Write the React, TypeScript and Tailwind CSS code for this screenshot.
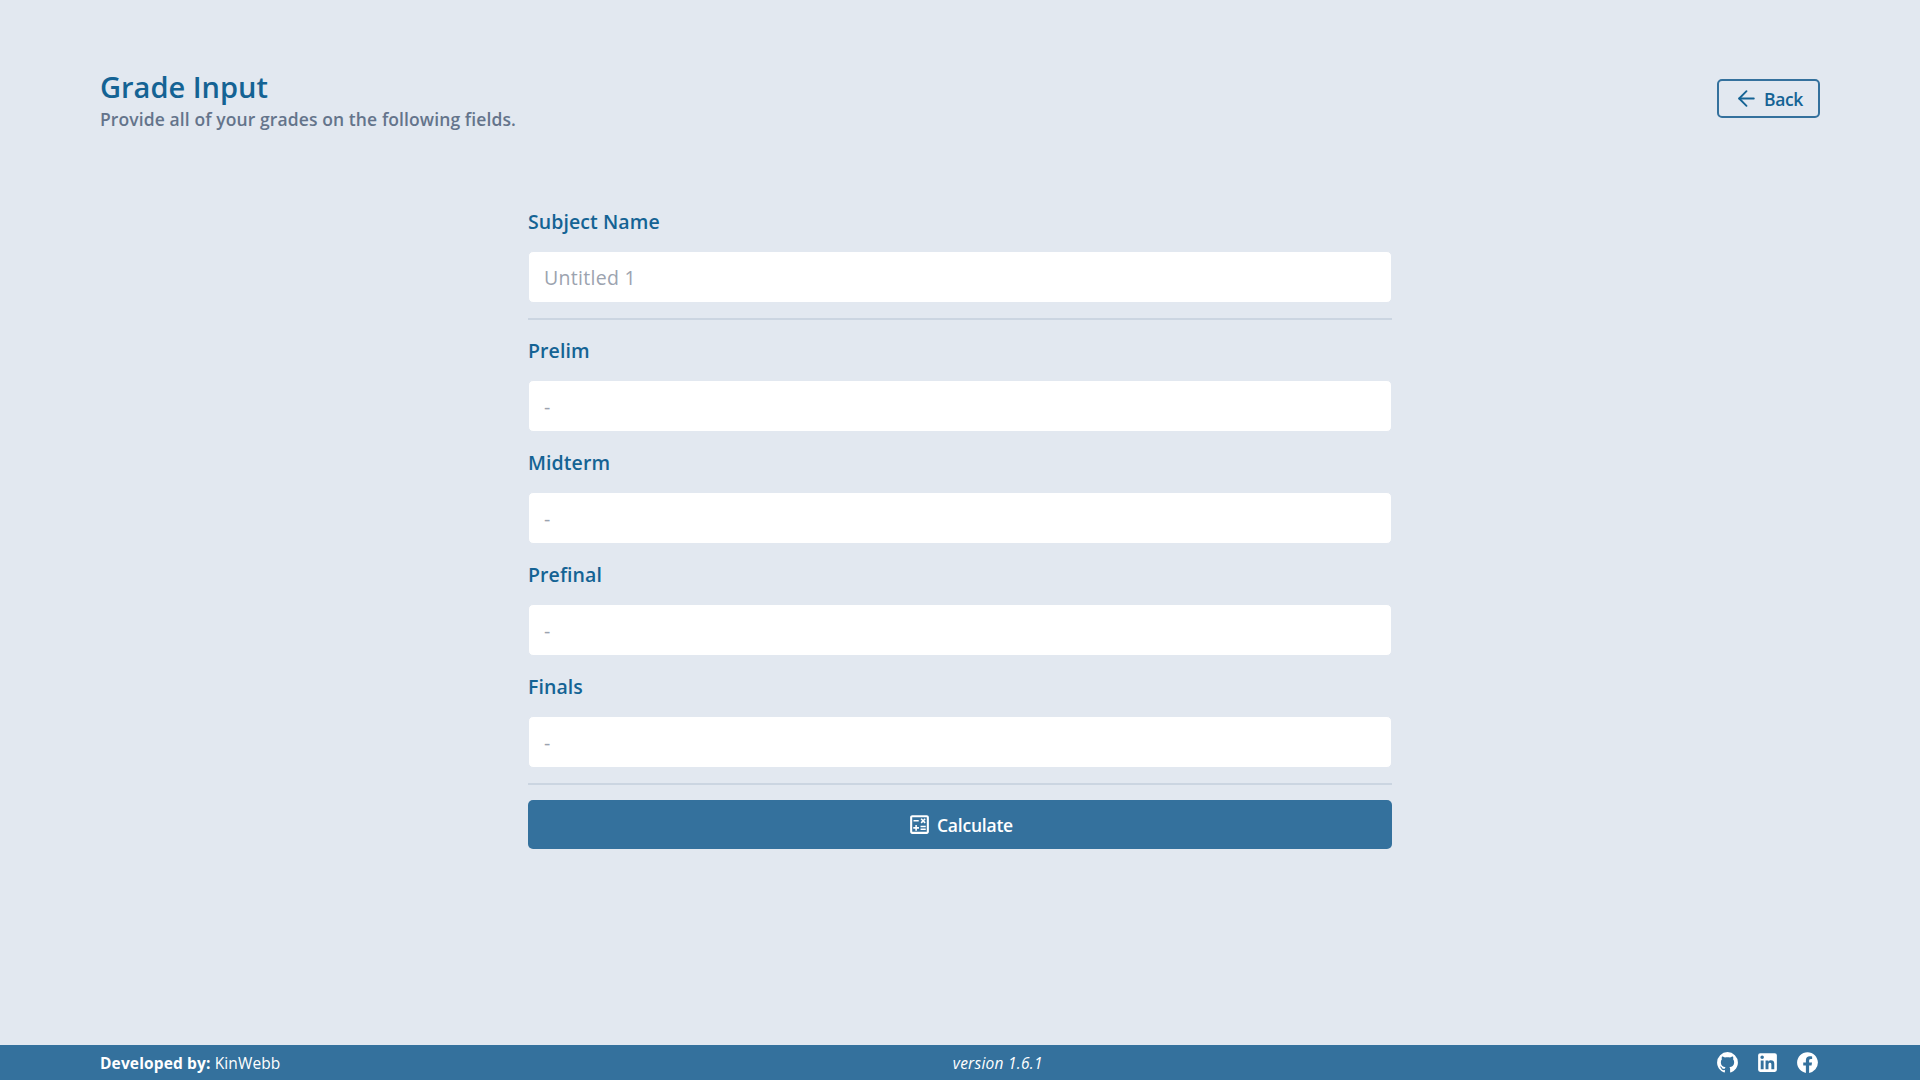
import React from 'react';
import { FiArrowLeft } from 'react-icons/fi';
import { MdOutlineCalculate } from 'react-icons/md';

type FieldProps = { label: string; placeholder: string };

function Field({ label, placeholder }: FieldProps) {
  return (
    <label className="flex flex-col gap-[15px]">
      <span className="pt-px text-[19.5px] leading-7 font-semibold tracking-[0.08px] text-[#146394]">{label}</span>
      <input
        className="h-[52px] w-full rounded-[5px] border border-[#e2e8f0] bg-white px-[15px] text-[19.5px] tracking-[0.3px] text-slate-700 outline-none placeholder:text-[#9ca3af]"
        placeholder={placeholder}
      />
    </label>
  );
}

const SOCIALS = [
  {
    name: 'GitHub',
    path: 'M12 2A10 10 0 0 0 2 12c0 4.42 2.87 8.17 6.84 9.5.5.08.66-.23.66-.5v-1.69c-2.77.6-3.36-1.34-3.36-1.34-.46-1.16-1.11-1.47-1.11-1.47-.91-.62.07-.6.07-.6 1 .07 1.53 1.03 1.53 1.03.87 1.52 2.34 1.07 2.91.83.09-.65.35-1.09.63-1.34-2.22-.25-4.55-1.11-4.55-4.92 0-1.11.38-2 1.03-2.71-.1-.25-.45-1.29.1-2.64 0 0 .84-.27 2.75 1.02.79-.22 1.65-.33 2.5-.33.85 0 1.71.11 2.5.33 1.91-1.29 2.75-1.02 2.75-1.02.55 1.35.2 2.39.1 2.64.65.71 1.03 1.6 1.03 2.71 0 3.82-2.34 4.66-4.57 4.91.36.31.69.92.69 1.85V21c0 .27.16.59.67.5C19.14 20.16 22 16.42 22 12A10 10 0 0 0 12 2z',
  },
  {
    name: 'LinkedIn',
    path: 'M19 3a2 2 0 0 1 2 2v14a2 2 0 0 1-2 2H5a2 2 0 0 1-2-2V5a2 2 0 0 1 2-2h14m-.5 15.5v-5.3a3.26 3.26 0 0 0-3.26-3.26c-.85 0-1.84.52-2.32 1.3v-1.11h-2.79v8.37h2.79v-4.93c0-.77.62-1.4 1.39-1.4a1.4 1.4 0 0 1 1.4 1.4v4.93h2.79M6.88 8.56a1.68 1.68 0 0 0 1.68-1.68c0-.93-.75-1.69-1.68-1.69a1.69 1.69 0 0 0-1.69 1.69c0 .93.76 1.68 1.69 1.68m1.39 9.94v-8.37H5.5v8.37h2.77z',
  },
  {
    name: 'Facebook',
    path: 'M12 2.04c-5.5 0-10 4.49-10 10.02 0 5 3.66 9.15 8.44 9.9v-7H7.9v-2.9h2.54V9.85c0-2.51 1.49-3.89 3.78-3.89 1.09 0 2.23.19 2.23.19v2.47h-1.26c-1.24 0-1.63.77-1.63 1.56v1.88h2.78l-.45 2.9h-2.33v7a10 10 0 0 0 8.44-9.9c0-5.53-4.5-10.02-10-10.02z',
  },
];

export default function App() {
  return (
    <div className="flex h-screen flex-col bg-[#e2e8f0] font-['Open_Sans','Noto_Sans',sans-serif]">
      <header className="flex items-start justify-between px-[100px] pt-[69px]">
        <div>
          <h1 className="text-[29px] leading-9 font-semibold text-[#146394]">Grade Input</h1>
          <p className="text-[17.5px] leading-7 font-semibold tracking-[0.1px] text-[#64748b]">
            Provide all of your grades on the following fields.
          </p>
        </div>
        <button className="mt-2.5 flex h-[39px] items-center gap-[5px] rounded-[5px] border-2 border-[#34719d] px-[15px] text-[#146394]">
          <FiArrowLeft size={25} strokeWidth={1.8} />
          <span className="pt-px text-[17.5px] leading-7 font-semibold tracking-[-0.35px]">Back</span>
        </button>
      </header>

      <main className="mx-auto mt-[74px] flex w-[864px] flex-1 flex-col">
        <Field label="Subject Name" placeholder="Untitled 1" />
        <hr className="mt-[15px] mb-4 border-t-2 border-[#cbd5e1]" />
        <div className="flex flex-col gap-4">
          <Field label="Prelim" placeholder="-" />
          <Field label="Midterm" placeholder="-" />
          <Field label="Prefinal" placeholder="-" />
          <Field label="Finals" placeholder="-" />
        </div>
        <hr className="my-[15px] border-t-2 border-[#cbd5e1]" />
        <button className="flex h-[49px] items-center justify-center gap-[5px] rounded-[5px] bg-[#34719d] text-white">
          <MdOutlineCalculate size={25} />
          <span className="pt-px text-[17.5px] leading-7 font-semibold tracking-[-0.22px]">Calculate</span>
        </button>
      </main>

      <footer className="flex h-[35px] items-center justify-between bg-[#34719d] px-[100px] text-[15.5px] leading-6 text-white">
        <p className="pt-px tracking-[0.13px]">
          <b className="font-bold">Developed by:</b> KinWebb
        </p>
        <p className="pt-px tracking-[0.25px] italic">version 1.6.1</p>
        <div className="flex gap-[15px]">
          {SOCIALS.map((s) => (
            <svg key={s.name} width="25" height="25" viewBox="0 0 24 24" fill="currentColor" aria-label={s.name}>
              <path d={s.path} />
            </svg>
          ))}
        </div>
      </footer>
    </div>
  );
}
